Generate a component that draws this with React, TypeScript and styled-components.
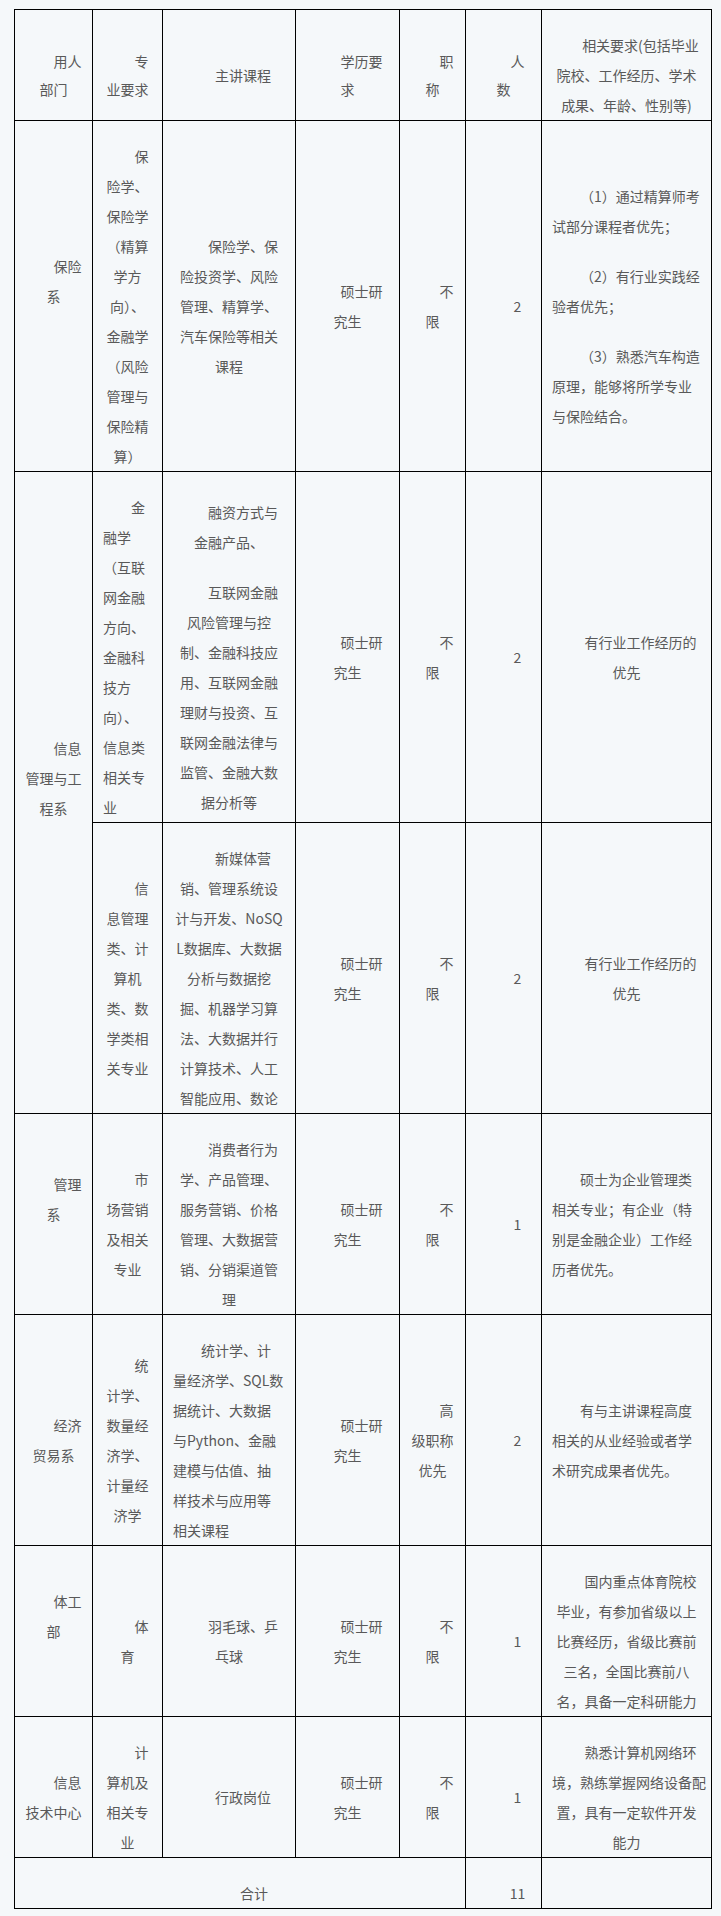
import React from 'react';
import styled, { createGlobalStyle } from 'styled-components';

type Align = 'left' | 'center';

interface CellData {
  text: string[];
  align?: Align;
  lift?: boolean;
  tight?: boolean;
  rowSpan?: number;
  colSpan?: number;
}

const colWidths = [78, 70, 133, 104, 66, 76, 170];

const header: CellData[] = [
  { text: ['用人\n部门'], tight: true },
  { text: ['专\n业要求'], tight: true },
  { text: ['主讲课程'] },
  { text: ['学历要\n求'], tight: true },
  { text: ['职\n称'], tight: true },
  { text: ['人\n数'], tight: true },
  { text: ['相关要求(包括毕业\n院校、工作经历、学术\n成果、年龄、性别等)'] },
];

const degree: CellData = { text: ['硕士研\n究生'] };
const anyTitle: CellData = { text: ['不\n限'] };
const experience: CellData = { text: ['有行业工作经历的\n优先'] };

const rows: CellData[][] = [
  [
    { text: ['保险\n系'], lift: true },
    {
      text: ['保\n险学、\n保险学\n（精算\n学方\n向）、\n金融学\n（风险\n管理与\n保险精\n算）'],
    },
    { text: ['保险学、保\n险投资学、风险\n管理、精算学、\n汽车保险等相关\n课程'] },
    degree,
    anyTitle,
    { text: ['2'] },
    {
      align: 'left',
      text: [
        '（1）通过精算师考\n试部分课程者优先；',
        '（2）有行业实践经\n验者优先；',
        '（3）熟悉汽车构造\n原理，能够将所学专业\n与保险结合。',
      ],
    },
  ],
  [
    { text: ['信息\n管理与工\n程系'], lift: true, rowSpan: 2 },
    {
      align: 'left',
      text: ['金\n融学\n（互联\n网金融\n方向、\n金融科\n技方\n向）、\n信息类\n相关专\n业'],
    },
    {
      text: [
        '融资方式与\n金融产品、',
        '互联网金融\n风险管理与控\n制、金融科技应\n用、互联网金融\n理财与投资、互\n联网金融法律与\n监管、金融大数\n据分析等',
      ],
    },
    degree,
    anyTitle,
    { text: ['2'] },
    experience,
  ],
  [
    { text: ['信\n息管理\n类、计\n算机\n类、数\n学类相\n关专业'] },
    {
      text: [
        '新媒体营\n销、管理系统设\n计与开发、NoSQ\nL数据库、大数据\n分析与数据挖\n掘、机器学习算\n法、大数据并行\n计算技术、人工\n智能应用、数论',
      ],
    },
    degree,
    anyTitle,
    { text: ['2'] },
    experience,
  ],
  [
    { text: ['管理\n系'], lift: true },
    { text: ['市\n场营销\n及相关\n专业'] },
    { text: ['消费者行为\n学、产品管理、\n服务营销、价格\n管理、大数据营\n销、分销渠道管\n理'] },
    degree,
    anyTitle,
    { text: ['1'] },
    {
      align: 'left',
      text: ['硕士为企业管理类\n相关专业；有企业（特\n别是金融企业）工作经\n历者优先。'],
    },
  ],
  [
    { text: ['经济\n贸易系'] },
    { text: ['统\n计学、\n数量经\n济学、\n计量经\n济学'] },
    {
      align: 'left',
      text: ['统计学、计\n量经济学、SQL数\n据统计、大数据\n与Python、金融\n建模与估值、抽\n样技术与应用等\n相关课程'],
    },
    degree,
    { text: ['高\n级职称\n优先'] },
    { text: ['2'] },
    {
      align: 'left',
      text: ['有与主讲课程高度\n相关的从业经验或者学\n术研究成果者优先。'],
    },
  ],
  [
    { text: ['体工\n部'], lift: true },
    { text: ['体\n育'] },
    { text: ['羽毛球、乒\n乓球'] },
    degree,
    anyTitle,
    { text: ['1'] },
    {
      text: ['国内重点体育院校\n毕业，有参加省级以上\n比赛经历，省级比赛前\n三名，全国比赛前八\n名，具备一定科研能力'],
    },
  ],
  [
    { text: ['信息\n技术中心'] },
    { text: ['计\n算机及\n相关专\n业'] },
    { text: ['行政岗位'] },
    degree,
    anyTitle,
    { text: ['1'] },
    { text: ['熟悉计算机网络环\n境，熟练掌握网络设备配\n置，具有一定软件开发\n能力'] },
  ],
  [{ text: ['合计'], colSpan: 5 }, { text: ['11'] }, { text: [] }],
];

const TableCell = ({ cell }: { cell: CellData }) => (
  <Cell
    rowSpan={cell.rowSpan}
    colSpan={cell.colSpan}
    $align={cell.align || 'center'}
    $lift={!!cell.lift}
    $tight={!!cell.tight}
  >
    {cell.text.map((para, key) => (
      <Para key={key}>{para}</Para>
    ))}
  </Cell>
);

const App = () => {
  return (
    <Page>
      <GlobalStyle />
      <Table>
        <colgroup>
          {colWidths.map((w, key) => (
            <col key={key} style={{ width: w }} />
          ))}
        </colgroup>
        <thead>
          <tr>
            {header.map((cell, key) => (
              <TableCell key={key} cell={cell} />
            ))}
          </tr>
        </thead>
        <tbody>
          {rows.map((row, r) => (
            <tr key={r}>
              {row.map((cell, key) => (
                <TableCell key={key} cell={cell} />
              ))}
            </tr>
          ))}
        </tbody>
      </Table>
    </Page>
  );
};

export default App;

const GlobalStyle = createGlobalStyle`
  html,
  body {
    margin: 0;
    padding: 0;
    background: #f5f8fa;
  }

  body {
    font-family: 'Noto Sans CJK SC', 'Noto Sans', sans-serif;
  }
`;

const Page = styled.div`
  padding: 9px 0 8px 14px;
  background: #f5f8fa;
  min-height: 1916px;
  box-sizing: border-box;
`;

const Table = styled.table`
  width: 697px;
  table-layout: fixed;
  border-collapse: collapse;
  border: 1px solid #000;
  font-size: 14px;
  color: #595959;
`;

const Cell = styled.td<{ $align: Align; $lift: boolean; $tight: boolean }>`
  border: 1px solid #000;
  padding: 0 10px ${(p) => (p.$lift ? '50px' : '0')};
  vertical-align: middle;
  text-align: ${(p) => p.$align};
  line-height: ${(p) => (p.$tight ? '28px' : '30px')};
  font-weight: normal;
`;

const Para = styled.p`
  margin: 20px 0 0;
  text-indent: 2em;
  white-space: pre;
`;
